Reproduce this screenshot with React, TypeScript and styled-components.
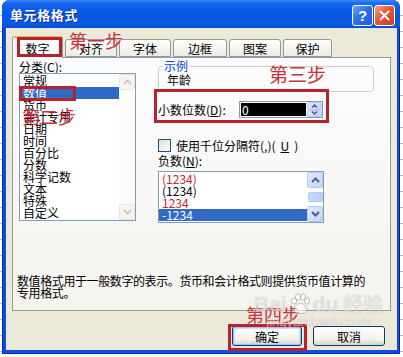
import React from 'react'
import styled, { createGlobalStyle } from 'styled-components'

const GlobalStyle = createGlobalStyle`
  html, body {
    margin: 0;
    padding: 0;
  }
  body {
    width: 403px;
    height: 357px;
    overflow: hidden;
    font-family: "Noto Sans CJK SC", "Liberation Sans", sans-serif;
    font-size: 12px;
    color: #000;
  }
`

const Desktop = styled.div`
  width: 403px;
  height: 357px;
  overflow: hidden;
  background: repeating-linear-gradient(to bottom, #ffffff 0 15px, #a9bde0 15px 16px);
`

const Window = styled.div`
  margin-left: 2px;
  width: 398px;
  height: 354px;
  box-sizing: border-box;
  display: flex;
  flex-direction: column;
  padding: 0 3px 4px 4px;
  border-radius: 8px 8px 0 0;
  background: #0a50dc;
  box-shadow: inset 1px 0 #0727a8, inset -1px 0 #0727a8, inset 0 -1px #0727a8;
`

const TitleBar = styled.div`
  height: 28px;
  margin: 0 -3px 0 -4px;
  padding: 0 5px 0 8px;
  display: flex;
  align-items: center;
  gap: 1px;
  border-radius: 8px 8px 0 0;
  background: linear-gradient(
    to bottom,
    #3d8af5 0%,
    #1a6cf0 10%,
    #0b5de6 30%,
    #0755e0 55%,
    #0a5ae6 85%,
    #0650d8 100%
  );
`

const Title = styled.div`
  flex: 1;
  color: #fff;
  font-weight: bold;
  font-size: 13px;
  letter-spacing: 0.6px;
  text-shadow: 1px 1px 0 #0b2a8c;
`

const CaptionButton = styled.div<{ $kind: 'help' | 'close' }>`
  width: 21px;
  height: 21px;
  margin-top: 3px;
  box-sizing: border-box;
  border: 1px solid #fff;
  border-radius: 3px;
  display: flex;
  align-items: center;
  justify-content: center;
  color: #fff;
  font-family: "Liberation Sans", sans-serif;
  font-weight: bold;
  font-size: 15px;
  background: ${(p) =>
    p.$kind === 'help'
      ? 'linear-gradient(135deg, #6aa2fb 0%, #2f6fe8 45%, #1f5cd8 100%)'
      : 'linear-gradient(135deg, #f3a388 0%, #e2593b 45%, #c8401f 100%)'};
`

const Body = styled.div`
  position: relative;
  flex: 1;
  display: flex;
  flex-direction: column;
  padding: 8px 6px 0 6px;
  background: #ece9d8;
`

const TabRow = styled.div`
  position: relative;
  z-index: 2;
  height: 22px;
  display: flex;
  align-items: flex-end;
  gap: 2px;
`

const Tab = styled.div<{ $active?: boolean; $w: number }>`
  position: relative;
  width: ${(p) => p.$w}px;
  height: ${(p) => (p.$active ? 22 : 18)}px;
  margin-bottom: ${(p) => (p.$active ? 0 : 1)}px;
  box-sizing: border-box;
  display: flex;
  align-items: center;
  justify-content: center;
  border: 1px solid #919b9c;
  border-bottom: ${(p) => (p.$active ? 'none' : '1px solid #919b9c')};
  border-top: ${(p) => (p.$active ? '2px solid #f4b24a' : '1px solid #919b9c')};
  border-radius: 3px 3px 0 0;
  background: ${(p) => (p.$active ? '#fcfcfe' : 'linear-gradient(#ffffff, #ecebe6)')};
`

const Panel = styled.div`
  margin-top: -1px;
  height: 254px;
  box-sizing: border-box;
  display: flex;
  flex-direction: column;
  padding: 2px 6px 0 6px;
  border: 1px solid #919b9c;
  background: linear-gradient(#fcfcfe, #f4f3ee);
`

const Columns = styled.div`
  display: grid;
  grid-template-columns: 117px 216px;
  column-gap: 22px;
`

const Column = styled.div`
  display: flex;
  flex-direction: column;
`

const Label = styled.div`
  line-height: 13px;
  height: 13px;
  white-space: nowrap;
`

const ListBox = styled.div<{ $h: number; $w?: number }>`
  position: relative;
  width: ${(p) => (p.$w ? `${p.$w}px` : 'auto')};
  height: ${(p) => p.$h}px;
  box-sizing: border-box;
  display: flex;
  border: 1px solid #7f9db9;
  background: #fff;
`

const Items = styled.div`
  flex: 1;
  padding-top: 1px;
`

const Item = styled.div<{ $selected?: boolean; $red?: boolean }>`
  position: relative;
  height: 12px;
  line-height: 12px;
  padding-left: 3px;
  white-space: nowrap;
  color: ${(p) => (p.$selected ? '#fff' : p.$red ? '#c0282c' : '#000')};
  background: ${(p) => (p.$selected ? '#316ac5' : 'transparent')};
`

const ScrollBar = styled.div`
  width: 16px;
  display: flex;
  flex-direction: column;
  justify-content: space-between;
  background: #fbfbf8;
`

const ScrollTrack = styled.div`
  flex: 1;
  display: flex;
  align-items: center;
  justify-content: center;
`

const Thumb = styled.div`
  width: 15px;
  height: 10px;
  box-sizing: border-box;
  border: 1px solid #b5c8f5;
  border-radius: 2px;
  background: linear-gradient(to right, #cad9fb, #b9cdf9);
`

const ScrollButton = styled.div<{ $disabled?: boolean }>`
  width: 16px;
  height: 16px;
  box-sizing: border-box;
  display: flex;
  align-items: center;
  justify-content: center;
  border: 1px solid ${(p) => (p.$disabled ? '#e8e7e0' : '#b5c8f5')};
  border-radius: 2px;
  background: ${(p) =>
    p.$disabled ? '#f5f4ef' : 'linear-gradient(135deg, #e3ebfd, #c0d2fb)'};
`

const Group = styled.fieldset`
  margin: 0;
  padding: 1px 8px 5px 8px;
  border: 1px solid #d0d0bf;
  border-radius: 4px;
`

const Legend = styled.legend`
  margin-left: -4px;
  padding: 0 1px;
  line-height: 12px;
  color: #0046d5;
`

const Sample = styled.div`
  line-height: 13px;
`

const DecimalRow = styled.div`
  position: relative;
  margin-top: 9px;
  height: 17px;
  display: flex;
  align-items: center;
`

const DecimalLabel = styled.div`
  width: 81px;
  white-space: nowrap;
`

const SpinBox = styled.div`
  width: 84px;
  height: 17px;
  box-sizing: border-box;
  display: flex;
  border: 1px solid #7f9db9;
  background: #fff;
`

const SpinValue = styled.div`
  flex: 1;
  margin: 1px;
  padding-left: 1px;
  line-height: 13px;
  color: #fff;
  background: #000;
`

const SpinButtons = styled.div`
  width: 15px;
  display: flex;
  flex-direction: column;
`

const SpinPart = styled.div`
  flex: 1;
  display: flex;
  align-items: center;
  justify-content: center;
  border: 1px solid #b5c8f5;
  border-radius: 2px;
  background: linear-gradient(135deg, #e3ebfd, #c0d2fb);
`

const CheckRow = styled.div`
  margin-top: 21px;
  height: 13px;
  display: flex;
  align-items: center;
  gap: 5px;
  white-space: nowrap;
`

const CheckBox = styled.span`
  width: 13px;
  height: 13px;
  box-sizing: border-box;
  border: 1px solid #1c5180;
  background: linear-gradient(135deg, #dcdcd7, #ffffff);
`

const NegLabel = styled(Label)`
  margin-top: 2px;
  margin-bottom: 4px;
`

const Description = styled.div`
  margin: 52px 0 0 -2px;
  line-height: 12px;
  letter-spacing: -0.4px;
  white-space: nowrap;
`

const ButtonRow = styled.div`
  margin-top: 15px;
  padding-right: 6px;
  display: flex;
  justify-content: flex-end;
  gap: 11px;
`

const PushButton = styled.div<{ $w: number; $default?: boolean }>`
  position: relative;
  width: ${(p) => p.$w}px;
  height: 20px;
  box-sizing: border-box;
  display: flex;
  align-items: center;
  justify-content: center;
  border: 1px solid #003c74;
  border-radius: 3px;
  background: linear-gradient(#ffffff, #f2f1ea 70%, #d8d5c6);
  box-shadow: ${(p) => (p.$default ? 'inset 0 0 0 1px #a8c2f0, inset 0 0 0 2px #cddcf8' : 'none')};
`

const RedBox = styled.span<{ $t: number; $l: number; $w: number; $h: number }>`
  position: absolute;
  top: ${(p) => p.$t}px;
  left: ${(p) => p.$l}px;
  width: ${(p) => p.$w}px;
  height: ${(p) => p.$h}px;
  box-sizing: border-box;
  border: 3px solid #b8222c;
  pointer-events: none;
  z-index: 5;
`

const Step = styled.span<{ $t: number; $l: number; $size?: number }>`
  position: absolute;
  top: ${(p) => p.$t}px;
  left: ${(p) => p.$l}px;
  z-index: 6;
  font-size: ${(p) => p.$size ?? 18}px;
  line-height: 1;
  color: #c8333b;
  white-space: nowrap;
  pointer-events: none;
`

const Watermark = styled.div`
  position: absolute;
  left: 248px;
  top: 264px;
  z-index: 7;
  display: flex;
  flex-direction: column;
  align-items: center;
  color: rgba(255, 255, 255, 0.5);
  text-shadow: 0 0 1px rgba(120, 120, 120, 0.4);
  pointer-events: none;
`

const MarkLine = styled.div`
  display: flex;
  align-items: center;
  gap: 2px;
  font-family: "Liberation Sans", sans-serif;
  font-weight: bold;
  font-size: 21px;
  line-height: 24px;
`

const MarkCjk = styled.span`
  font-family: "Noto Sans CJK SC", sans-serif;
  font-size: 20px;
  margin-left: 3px;
`

const MarkUrl = styled.div`
  font-family: "Liberation Sans", sans-serif;
  font-size: 13px;
  line-height: 12px;
`

function Chevron({ dir, color }: { dir: 'up' | 'down'; color: string }) {
  return (
    <svg width="9" height="6" viewBox="0 0 9 6">
      <polyline
        points={dir === 'up' ? '1,5 4.5,1.5 8,5' : '1,1 4.5,4.5 8,1'}
        fill="none"
        stroke={color}
        strokeWidth="2"
      />
    </svg>
  )
}

function SmallChevron({ dir }: { dir: 'up' | 'down' }) {
  return (
    <svg width="7" height="4" viewBox="0 0 7 4">
      <polyline
        points={dir === 'up' ? '1,3.5 3.5,1 6,3.5' : '1,0.5 3.5,3 6,0.5'}
        fill="none"
        stroke="#4d6185"
        strokeWidth="1.5"
      />
    </svg>
  )
}

function Paw() {
  return (
    <svg width="22" height="22" viewBox="0 0 22 22">
      <g fill="rgba(255,255,255,0.55)" stroke="rgba(120,120,120,0.45)" strokeWidth="1">
        <ellipse cx="5" cy="8" rx="2.6" ry="3.2" />
        <ellipse cx="9" cy="4" rx="2.6" ry="3.2" />
        <ellipse cx="14" cy="4" rx="2.6" ry="3.2" />
        <ellipse cx="18" cy="8" rx="2.6" ry="3.2" />
        <path d="M11.5 10c-3 0-6.5 4.5-6.5 7.5 0 2.5 3 3 6.5 3s6.5-0.5 6.5-3c0-3-3.5-7.5-6.5-7.5z" />
      </g>
    </svg>
  )
}

const tabs = ['数字', '对齐', '字体', '边框', '图案', '保护']
const tabWidths = [51, 52, 52, 54, 52, 49]

const categories = [
  '常规', '数值', '货币', '会计专用', '日期', '时间',
  '百分比', '分数', '科学记数', '文本', '特殊', '自定义',
]

const negatives = [
  { text: '(1234)', red: true },
  { text: '(1234)', red: false },
  { text: '1234', red: true },
  { text: '-1234', red: false },
]

export default function App() {
  return (
    <>
      <GlobalStyle />
      <Desktop>
        <Window>
          <TitleBar>
            <Title>单元格格式</Title>
            <CaptionButton $kind="help">?</CaptionButton>
            <CaptionButton $kind="close">
              <svg width="11" height="11" viewBox="0 0 11 11">
                <path d="M1.5 1.5l8 8M9.5 1.5l-8 8" stroke="#fff" strokeWidth="2" strokeLinecap="round" />
              </svg>
            </CaptionButton>
          </TitleBar>
          <Body>
            <TabRow>
              {tabs.map((t, i) => (
                <Tab key={t} $active={i === 0} $w={tabWidths[i]}>
                  {t}
                  {i === 0 && (
                    <>
                      <RedBox $t={-1} $l={4} $w={45} $h={20} />
                      <Step $t={-7} $l={56}>第一步</Step>
                    </>
                  )}
                </Tab>
              ))}
            </TabRow>
            <Panel>
              <Columns>
                <Column>
                  <Label>分类(<u>C</u>):</Label>
                  <ListBox $h={148}>
                    <Items>
                      {categories.map((c, i) => (
                        <Item key={c} $selected={i === 1}>
                          {c}
                          {i === 1 && (
                            <>
                              <RedBox $t={-1} $l={-1} $w={57} $h={15} />
                              <Step $t={20} $l={2}>第二步</Step>
                            </>
                          )}
                        </Item>
                      ))}
                    </Items>
                    <ScrollBar>
                      <ScrollButton $disabled><Chevron dir="up" color="#cfcdc2" /></ScrollButton>
                      <ScrollButton $disabled><Chevron dir="down" color="#cfcdc2" /></ScrollButton>
                    </ScrollBar>
                  </ListBox>
                </Column>
                <Column>
                  <Group>
                    <Legend>示例</Legend>
                    <Sample>年龄</Sample>
                  </Group>
                  <DecimalRow>
                    <DecimalLabel>小数位数(<u>D</u>):</DecimalLabel>
                    <SpinBox>
                      <SpinValue>0</SpinValue>
                      <SpinButtons>
                        <SpinPart><SmallChevron dir="up" /></SpinPart>
                        <SpinPart><SmallChevron dir="down" /></SpinPart>
                      </SpinButtons>
                    </SpinBox>
                    <RedBox $t={-12} $l={-4} $w={175} $h={34} />
                    <Step $t={-37} $l={111} $size={19}>第三步</Step>
                  </DecimalRow>
                  <CheckRow>
                    <CheckBox />
                    使用千位分隔符(,)(<u>U</u>)
                  </CheckRow>
                  <NegLabel>负数(<u>N</u>):</NegLabel>
                  <ListBox $h={52} $w={166}>
                    <Items>
                      {negatives.map((n, i) => (
                        <Item key={i} $red={n.red} $selected={i === 3}>{n.text}</Item>
                      ))}
                    </Items>
                    <ScrollBar>
                      <ScrollButton><Chevron dir="up" color="#4d6185" /></ScrollButton>
                      <ScrollTrack><Thumb /></ScrollTrack>
                      <ScrollButton><Chevron dir="down" color="#4d6185" /></ScrollButton>
                    </ScrollBar>
                  </ListBox>
                </Column>
              </Columns>
              <Description>
                数值格式用于一般数字的表示。货币和会计格式则提供货币值计算的
                <br />
                专用格式。
              </Description>
            </Panel>
            <ButtonRow>
              <PushButton $w={70} $default>
                确定
                <RedBox $t={-3} $l={-5} $w={79} $h={27} />
                <Step $t={-22} $l={13}>第四步</Step>
              </PushButton>
              <PushButton $w={72}>取消</PushButton>
            </ButtonRow>
            <Watermark>
              <MarkLine>
                Bai<Paw />du<MarkCjk>经验</MarkCjk>
              </MarkLine>
              <MarkUrl>jingyan.baidu.com</MarkUrl>
            </Watermark>
          </Body>
        </Window>
      </Desktop>
    </>
  )
}
